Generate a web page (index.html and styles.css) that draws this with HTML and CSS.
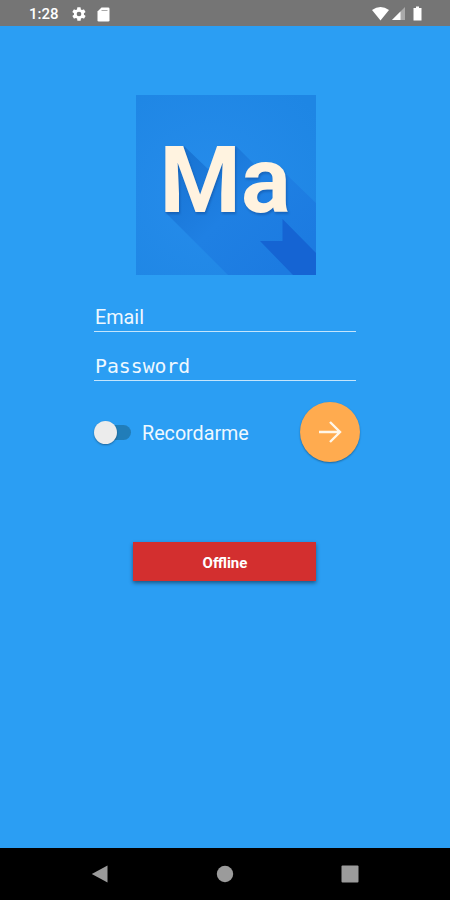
FILE: index.html
```html
<!DOCTYPE html>
<html lang="es">
  <head>
    <meta charset="UTF-8" />
    <meta name="viewport" content="width=device-width, initial-scale=1.0" />
    <title>Login</title>
    <link rel="stylesheet" href="styles.css" />
  </head>
  <body>
    <div class="main">
      <header class="statusBar">
        <span class="time">1:28</span>
        <svg class="gear" width="16" height="16" viewBox="0 0 24 24">
          <path fill="#fff" fill-rule="evenodd" d="M19.4 13a7.500 7.500 0 0 0 0-2l2.100-1.600a.5.5 0 0 0 .1-.7l-2-3.400a.5.5 0 0 0-.6-.2l-2.500 1a7 7 0 0 0-1.700-1L14.400 2.400a.5.5 0 0 0-.5-.4h-4a.5.5 0 0 0-.5.400l-.4 2.700a7 7 0 0 0-1.700 1l-2.500-1a.5.5 0 0 0-.6.200l-2 3.400a.5.5 0 0 0 .1.700L4.500 11a7.500 7.500 0 0 0 0 2l-2.100 1.600a.5.5 0 0 0-.1.700l2 3.400c.1.200.4.300.6.200l2.500-1a7 7 0 0 0 1.700 1l.4 2.700c0 .2.200.4.500.4h4c.2 0 .5-.2.500-.4l.4-2.700a7 7 0 0 0 1.700-1l2.500 1c.2.100.5 0 .6-.2l2-3.400a.5.5 0 0 0-.1-.7zM12 8.500a3.500 3.500 0 1 1 0 7a3.500 3.500 0 0 1 0-7z" />
        </svg>
        <svg class="card" width="13" height="15" viewBox="0 0 13 15">
          <path fill="#fff" d="M4.500.5h6.700q1.300 0 1.300 1.300v11.400q0 1.300-1.300 1.300H1.800Q.5 14.500.5 13.200V4.500z" />
          <path stroke="#aaa" stroke-width="1" d="M4.500 3.500h6" />
        </svg>
        <svg class="signals" width="50" height="16" viewBox="0 0 50 16">
          <path fill="#fff" d="M0 4Q8.500-2 17 4L8.500 14.500z" />
          <path fill="#a9a9a9" d="M33 1v13H20z" />
          <path fill="#fff" d="M28.500 5.500V14H20z" />
          <path fill="#fff" d="M44 .5h3v1.500h2.500V14.500h-8V2H44z" />
        </svg>
      </header>

      <div class="container">
        <svg class="logo" width="180" height="180" viewBox="0 0 180 180">
          <defs>
            <radialGradient id="bg" cx="40%" cy="55%" r="75%">
              <stop offset="0" stop-color="#268ceb" />
              <stop offset="1" stop-color="#1e86e4" />
            </radialGradient>
            <linearGradient id="long" gradientUnits="userSpaceOnUse" x1="50" y1="50" x2="160" y2="160">
              <stop offset="0" stop-color="#1873d2" />
              <stop offset="0.500" stop-color="#1f80e3" />
              <stop offset="1" stop-color="#1c7be1" />
            </linearGradient>
          </defs>
          <rect width="180" height="180" fill="url(#bg)" />
          <path fill="url(#long)" d="M29 117L48 51L72 74L100 51L126 77L151 80L180 108V180H92z" />
          <path fill="#1564d3" d="M146.500 124L180 158V180H157L124 146H146.500z" />
          <text class="logoText" x="23.500" y="117.300">Ma</text>
        </svg>

        <div class="form">
          <div class="field">Email</div>
          <div class="field mono">Password</div>
          <div class="row">
            <span class="switch"><span class="thumb"></span></span>
            <span class="remember">Recordarme</span>
            <button class="fab" aria-label="Entrar">
              <svg width="24" height="24" viewBox="0 0 24 24">
                <path fill="none" stroke="#fff6e8" stroke-width="2.400" d="M1 12H22M12 2L22 12L12 22" />
              </svg>
            </button>
          </div>
        </div>

        <button class="offline">Offline</button>
      </div>

      <nav class="navBar">
        <svg width="18" height="18" viewBox="0 0 18 18">
          <path fill="#9b9b9b" d="M16.500.5v17L.8 9z" />
        </svg>
        <svg width="18" height="18" viewBox="0 0 18 18">
          <circle cx="9" cy="9" r="8.200" fill="#9b9b9b" />
        </svg>
        <svg width="18" height="18" viewBox="0 0 18 18">
          <rect x=".5" y=".5" width="17" height="17" rx="1" fill="#9b9b9b" />
        </svg>
      </nav>
    </div>
  </body>
</html>
```
FILE: styles.css
```css
* {
  padding: 0;
  margin: 0;
  box-sizing: border-box;
  font-family: Roboto, sans-serif;
}
body {
  background-color: #2b9ef3;
}
svg {
  display: block;
}
button {
  border: none;
}
.main {
  display: flex;
  flex-direction: column;
  width: 100%;
  height: 900px;
}
.statusBar {
  display: flex;
  align-items: center;
  height: 26px;
  padding: 2px 28px 0 29px;
  background-color: #757575;
  color: white;
}
.time {
  width: 42px;
  font-size: 15px;
  font-weight: 500;
}
.card {
  margin-left: 10px;
}
.signals {
  margin-left: auto;
}
.container {
  flex: 1;
  display: flex;
  flex-direction: column;
  align-items: center;
  padding-top: 69px;
}
.logo {
  margin-left: 1px;
}
.logoText {
  font-size: 93px;
  font-weight: 700;
  fill: #fff3e0;
  filter: drop-shadow(1px 2px 1px rgba(10, 60, 130, 0.4));
}
.form {
  width: 262px;
  margin-top: 28px;
  color: #eef8ff;
}
.field {
  height: 29px;
  padding-left: 1px;
  border-bottom: 1px solid #c4e5fc;
  font-size: 19.8px;
  line-height: 30px;
}
.field + .field {
  margin-top: 20px;
}
.mono {
  font-family: "DejaVu Sans Mono", monospace;
}
.row {
  display: flex;
  align-items: center;
  height: 60px;
  margin: 21px -4px 0 0;
}
.switch {
  width: 36px;
  height: 15px;
  margin: 0 11px 0 1px;
  border-radius: 8px;
  background-color: #217db9;
}
.thumb {
  display: block;
  width: 23px;
  height: 23px;
  margin: -4px 0 0 -1px;
  border-radius: 50%;
  background-color: #ececec;
  box-shadow: 0 1px 2px rgba(0, 0, 0, 0.35);
}
.remember {
  padding-top: 2px;
  font-size: 19.7px;
}
.fab {
  display: flex;
  align-items: center;
  justify-content: center;
  width: 60px;
  height: 60px;
  margin-left: auto;
  border-radius: 50%;
  background-color: #ffab4f;
  box-shadow: 0 1px 2px rgba(0, 0, 0, 0.35);
}
.offline {
  width: 183px;
  height: 39px;
  margin: 80px 1px 0 0;
  padding: 3px 0 0 1px;
  background-color: #d32f2f;
  box-shadow: 0 2px 4px rgba(0, 0, 0, 0.45);
  color: white;
  font-size: 15px;
  font-weight: 700;
}
.navBar {
  display: flex;
  justify-content: space-between;
  align-items: center;
  height: 52px;
  padding: 0 91px;
  background-color: black;
}
```
